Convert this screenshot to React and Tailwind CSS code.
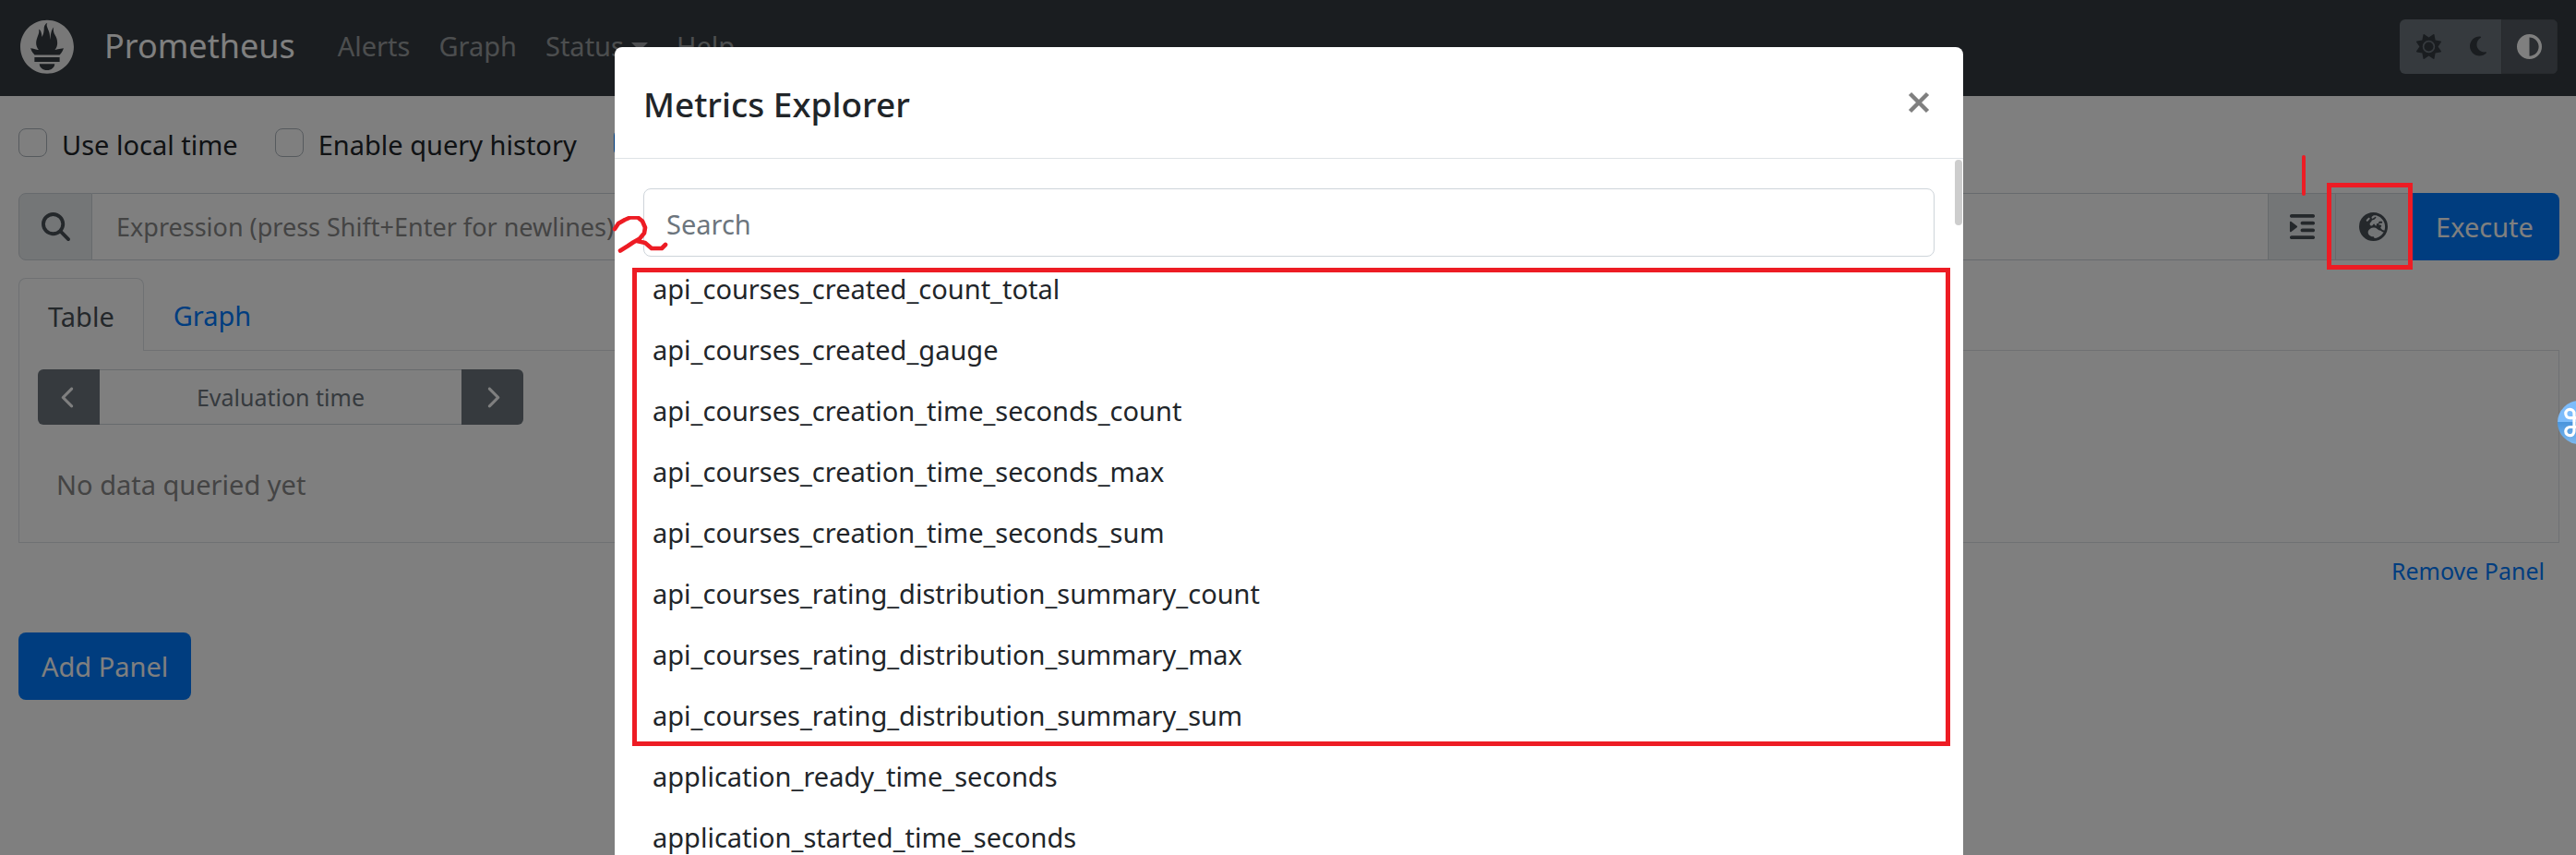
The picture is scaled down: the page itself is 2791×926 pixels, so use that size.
import React from "react";
import {
  FaSun,
  FaMoon,
  FaCircleHalfStroke,
  FaMagnifyingGlass,
  FaIndent,
  FaEarthEurope,
  FaChevronLeft,
  FaChevronRight,
} from "react-icons/fa6";

const METRICS = [
  "api_courses_created_count_total",
  "api_courses_created_gauge",
  "api_courses_creation_time_seconds_count",
  "api_courses_creation_time_seconds_max",
  "api_courses_creation_time_seconds_sum",
  "api_courses_rating_distribution_summary_count",
  "api_courses_rating_distribution_summary_max",
  "api_courses_rating_distribution_summary_sum",
  "application_ready_time_seconds",
  "application_started_time_seconds",
];

function Logo() {
  return (
    <svg viewBox="0 0 115.333 114" className="size-[59px]" fill="#f0f0f0" aria-hidden="true">
      <path d="M56.667.667C25.372.667 0 26.036 0 57.332c0 31.295 25.372 56.666 56.667 56.666s56.666-25.371 56.666-56.666c0-31.296-25.372-56.665-56.666-56.665zm0 106.055c-8.904 0-16.123-5.948-16.123-13.283H72.79c0 7.334-7.219 13.283-16.123 13.283zm26.63-17.68H30.035v-9.658h53.262v9.658zm-.191-14.627H30.188c-.176-.203-.356-.403-.526-.609-5.452-6.62-6.736-10.076-7.983-13.598-.021-.116 6.611 1.355 11.314 2.413 0 0 2.42.56 5.958 1.205-3.397-3.982-5.414-9.044-5.414-14.218 0-11.359 8.712-21.285 5.569-29.308 3.059.249 6.331 6.456 6.552 16.161 3.252-4.494 4.613-12.701 4.613-17.733 0-5.21 3.433-11.262 6.867-11.469-3.061 5.045.793 9.37 4.219 20.099 1.285 4.03 1.121 10.812 2.113 15.113.33-8.933 1.866-21.967 7.542-26.464-2.504 5.676.371 12.778 2.337 16.193 3.172 5.509 5.095 9.683 5.095 17.575 0 5.292-1.954 10.274-5.25 14.129 3.748-.703 6.337-1.338 6.337-1.338l12.17-2.375c.001 0-1.768 7.271-8.563 14.224z" />
    </svg>
  );
}

function ThemeSwitch() {
  return (
    <div className="flex h-[59px] overflow-hidden rounded-md text-[27px] text-[#343a40]">
      <button aria-label="Light theme" className="flex w-[55px] items-center justify-center bg-[#6c757d] pl-2">
        <FaSun />
      </button>
      <button aria-label="Dark theme" className="flex w-[55px] items-center justify-center bg-[#6c757d] pl-1">
        <FaMoon className="text-2xl" />
      </button>
      <button
        aria-label="Browser theme"
        className="flex w-[61px] items-center justify-center border border-[#4e555b] bg-[#545b62] text-white"
      >
        <FaCircleHalfStroke />
      </button>
    </div>
  );
}

function Check({ label, checked }) {
  return (
    <label className="flex items-start gap-4 leading-[44px]">
      <input
        type="checkbox"
        defaultChecked={checked}
        className="mt-1 size-[31px] appearance-none rounded-lg border border-[#adb5bd] bg-white checked:border-[#007bff] checked:bg-[#007bff]"
      />
      {label}
    </label>
  );
}

function Navbar() {
  return (
    <header className="flex h-[104px] items-center bg-[#343a40] pr-5 pb-1 pl-[22px] text-white/50">
      <Logo />
      <a href="#home" className="pl-8 text-[36px] text-white">
        Prometheus
      </a>
      <nav className="flex grow gap-[31px] pl-[46px]">
        <a href="#alerts">Alerts</a>
        <a href="#graph">Graph</a>
        <a href="#status" className="flex items-center gap-2">
          Status
          <svg viewBox="0 0 18 9" className="h-[9px] w-[18px]" fill="currentColor" aria-hidden="true">
            <path d="M0 0h18L9 9z" />
          </svg>
        </a>
        <a href="#help">Help</a>
      </nav>
      <ThemeSwitch />
    </header>
  );
}

function QueryRow() {
  return (
    <div className="flex h-[73px]">
      <span className="flex w-20 items-center justify-center rounded-l-lg border border-[#ced4da] bg-[#e9ecef] text-[31px] text-[#495057]">
        <FaMagnifyingGlass />
      </span>
      <input
        aria-label="Expression"
        placeholder="Expression (press Shift+Enter for newlines)"
        className="min-w-0 grow border-y border-[#ced4da] px-[26px] pt-0.5 text-[27px] placeholder:text-[#888]"
      />
      <button
        aria-label="Format expression"
        className="flex w-[74px] items-center justify-center border border-[#ced4da] bg-[#e9ecef] text-[31px] text-[#495057]"
      >
        <FaIndent />
      </button>
      <button
        aria-label="Open metrics explorer"
        className="flex w-[82px] items-center justify-center border-y border-[#ced4da] bg-[#e9ecef] pr-0.5 text-[31px] text-[#495057]"
      >
        <FaEarthEurope />
      </button>
      <button className="w-[160px] rounded-r-lg bg-[#007bff] pr-0.5 text-white">Execute</button>
    </div>
  );
}

function Panel() {
  return (
    <section>
      <div className="mt-[19px] flex border-b border-[#dee2e6] leading-[44px]">
        <button className="-mb-px h-[79px] rounded-t-lg border border-b-0 border-[#dee2e6] bg-white px-[31px] pt-1 text-[#495057]">
          Table
        </button>
        <button className="px-8 pt-1 text-[#007bff]">Graph</button>
      </div>
      <div className="border border-t-0 border-[#dee2e6] px-5 pt-5 pb-10">
        <div className="flex h-[60px] w-[526px] text-[25px]">
          <button
            aria-label="Decrease evaluation time"
            className="flex w-[67px] shrink-0 items-center justify-center rounded-l-md bg-[#6c757d] text-white"
          >
            <FaChevronLeft />
          </button>
          <input
            aria-label="Evaluation time"
            placeholder="Evaluation time"
            className="min-w-0 grow border-y border-[#ced4da] pt-0.5 text-center placeholder:text-[#6c757d]"
          />
          <button
            aria-label="Increase evaluation time"
            className="flex w-[67px] shrink-0 items-center justify-center rounded-r-md bg-[#6c757d] text-white"
          >
            <FaChevronRight />
          </button>
        </div>
        <p className="mt-[43px] pl-5 leading-[44px] text-[#888]">No data queried yet</p>
      </div>
      <div className="mt-[11px] flex justify-end pr-4">
        <button className="text-[25px] leading-[38px] text-[#007bff]">Remove Panel</button>
      </div>
    </section>
  );
}

function QueryAnnotations() {
  return (
    <div aria-hidden="true">
      <div className="absolute top-[198px] right-[177px] h-[94px] w-[93px] border-[5px] border-[#ed1c24]" />
      <div className="absolute top-[168px] right-[293px] h-11 w-1 rounded-sm bg-[#ed1c24]" />
    </div>
  );
}

function ShortcutBubble() {
  return (
    <svg viewBox="0 0 20 48" className="absolute top-[434px] right-0 h-12 w-5" aria-hidden="true">
      <defs>
        <linearGradient id="bubble" x1="0" y1="0" x2="0" y2="1">
          <stop offset="0" stopColor="#7dbcfb" />
          <stop offset="0.49" stopColor="#7dbcfb" />
          <stop offset="0.5" stopColor="#4a95dc" />
          <stop offset="1" stopColor="#7db9f0" />
        </linearGradient>
      </defs>
      <circle cx="23.5" cy="23.5" r="23.5" fill="url(#bubble)" />
      <path
        d="M18 18.500V14a4.600 4.600 0 1 0-4.600 4.600H34M18 18v11M34 28.500H13.400A4.600 4.600 0 1 0 18 33V28"
        fill="none"
        stroke="#fff"
        strokeWidth="3.200"
      />
    </svg>
  );
}

function MetricsExplorer() {
  return (
    <div
      role="dialog"
      aria-modal="true"
      aria-labelledby="explorer-title"
      className="relative flex h-full w-full max-w-[1461px] flex-col rounded-t-lg bg-white"
    >
      <div className="flex h-[121px] shrink-0 items-center justify-between border-b border-[#dee2e6] pr-9 pl-[31px]">
        <h5 id="explorer-title" className="pt-1 text-[37px] font-medium">
          Metrics Explorer
        </h5>
        <button aria-label="Close" className="text-[#7f7f7f]">
          <svg viewBox="0 0 24 24" className="size-6" stroke="currentColor" strokeWidth="4.500" aria-hidden="true">
            <path d="M2.500 2.500l19 19M21.500 2.500l-19 19" />
          </svg>
        </button>
      </div>
      <div className="relative min-h-0 grow overflow-hidden px-[31px] pt-8">
        <input
          aria-label="Search"
          placeholder="Search"
          className="h-[74px] w-full rounded-lg border border-[#ced4da] px-6 pt-0.5 placeholder:text-[#6c757d]"
        />
        <ul className="mt-0.5">
          {METRICS.map((name) => (
            <li key={name} className="pl-[10px] leading-[66px]">
              {name}
            </li>
          ))}
        </ul>
        <div className="absolute top-px right-px h-[71px] w-2 rounded-full bg-[#cdcdcd]" />
      </div>
      <div
        aria-hidden="true"
        className="absolute top-[239px] right-[14px] left-[19px] h-[518px] border-[5px] border-[#ed1c24]"
      />
      <svg
        viewBox="0 0 64 44"
        className="absolute top-[183px] -left-1 h-11 w-16"
        fill="none"
        stroke="#ed1c24"
        strokeWidth="4.600"
        strokeLinecap="round"
        strokeLinejoin="round"
        aria-hidden="true"
      >
        <path d="M4 14l4-6 7-4 6-2.500h8l5 4 3 7-1 6-5 6-7 4-6 4-8 5M28 27l9 2 7 6h11l4-4" />
      </svg>
    </div>
  );
}

export default function App() {
  return (
    <div className="relative min-h-screen overflow-hidden bg-white font-['Noto_Sans','Open_Sans',sans-serif] text-[29px] text-[#212529]">
      <Navbar />
      <main className="pr-[18px] pl-5">
        <div className="flex gap-10 pt-[31px] pb-[30px]">
          <Check label="Use local time" />
          <Check label="Enable query history" />
          <Check label="Enable autocomplete" checked />
        </div>
        <QueryRow />
        <Panel />
        <button className="mt-12 h-[73px] rounded-lg bg-[#007bff] px-[25px] text-white">Add Panel</button>
      </main>
      <div className="fixed inset-0 flex justify-center overflow-hidden bg-black/50 pt-[51px] pl-0.5">
        <MetricsExplorer />
      </div>
      <QueryAnnotations />
      <ShortcutBubble />
    </div>
  );
}
